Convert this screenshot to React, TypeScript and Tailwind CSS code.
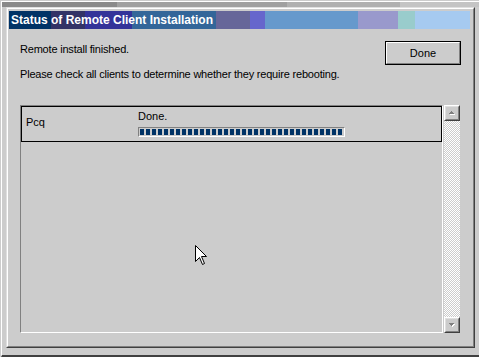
import React from "react";

function ScrollButton({ down }: { down?: boolean }) {
  return (
    <div className="h-[16px] w-[16px] shrink-0 border border-t-white border-l-white border-r-[#404040] border-b-[#404040] bg-[#cccccc]">
      <div className="flex h-full w-full items-center justify-center border border-t-[#dfdfdf] border-l-[#dfdfdf] border-r-[#808080] border-b-[#808080]">
        <svg width="7" height="5" viewBox="0 0 7 5">
          {down ? (
            <>
              <path d="M1 1h5v1H5v1H4v1H3V3H2V2H1z" fill="#ffffff" />
              <path d="M0 0h5v1H4v1H3v1H2V2H1V1H0z" fill="#808080" />
            </>
          ) : (
            <>
              <path d="M3 1h1v1h1v1h1v1H1V3h1V2h1z" fill="#ffffff" />
              <path d="M2 0h1v1h1v1h1v1H0V2h1V1h1z" fill="#808080" />
            </>
          )}
        </svg>
      </div>
    </div>
  );
}

function ProgressBar({ blocks }: { blocks: number }) {
  return (
    <div className="mt-[4px] flex h-[10px] w-[207px] gap-[2px] border border-t-[#808080] border-l-[#808080] border-r-white border-b-white p-px">
      {Array.from({ length: blocks }).map((_, i) => (
        <div key={i} className="h-[6px] w-[4px] bg-[#003366]" />
      ))}
    </div>
  );
}

function Cursor() {
  return (
    <svg
      className="absolute left-[195px] top-[245px]"
      width="13"
      height="21"
      viewBox="0 0 13 21"
    >
      <path
        d="M0.5 0.5V16.5L4.5 12.5L7.5 19.5L9.5 18.5L6.5 11.5H11.5Z"
        fill="#ffffff"
        stroke="#000000"
        strokeWidth="1"
        strokeLinejoin="miter"
      />
    </svg>
  );
}

export default function App() {
  return (
    <div className="relative h-[357px] w-[479px] overflow-hidden bg-[#cccccc] font-['Liberation_Sans',Arial,sans-serif] text-[11px] text-black">
      <div className="ml-px mt-px flex h-[356px] flex-col border-l border-t border-white border-b-2 border-b-[#404040]">
        <div className="h-[5px] shrink-0 bg-[linear-gradient(to_right,#8a8a8a_0_115px,#a0a0a0_115px_285px,#b0b0b0_285px_398px,#c4c4c4_398px)]" />
        <div className="ml-[4px] h-[341px] w-[469px] border border-t-[#dfdfdf] border-l-[#dfdfdf] border-r-[#404040] border-b-[#404040]">
          <div className="flex h-full flex-col border border-t-white border-l-white border-r-[#808080] border-b-[#808080]">
            <div className="ml-px mt-[2px] flex h-[18px] w-[461px] items-center bg-[linear-gradient(to_right,#003366_0_42px,#333366_42px_76px,#333399_76px_123px,#336699_123px_207px,#666699_207px_241px,#6666cc_241px_256px,#6699cc_256px_349px,#9999cc_349px_389px,#99cccc_389px_406px,#a6caf0_406px)] pl-[2px] text-[12px] font-bold leading-[18px] text-white">
              Status of Remote Client Installation
            </div>

            <div className="flex flex-col px-3 pt-3">
              <div className="flex items-start justify-between">
                <div className="mt-[2px] flex flex-col leading-[13px] tracking-[-0.2px]">
                  <p>Remote install finished.</p>
                  <p className="mt-3">
                    Please check all clients to determine whether they require
                    rebooting.
                  </p>
                </div>
                <button className="h-[24px] w-[76px] border border-black bg-[#cccccc]">
                  <div className="flex h-full w-full items-center justify-center border border-t-white border-l-white border-r-[#808080] border-b-[#808080] leading-[13px]">
                    Done
                  </div>
                </button>
              </div>

              <div className="mt-6 flex gap-px">
                <div className="h-[228px] w-[423px] border border-t-[#808080] border-l-[#808080] border-r-white border-b-white">
                  <div className="flex h-[36px] border border-black leading-[13px]">
                    <div className="w-[116px] pl-[4px] pt-[9px]">Pcq</div>
                    <div className="flex flex-col pt-[3px]">
                      <span>Done.</span>
                      <ProgressBar blocks={34} />
                    </div>
                  </div>
                </div>
                <div className="flex h-[228px] w-[16px] flex-col">
                  <ScrollButton />
                  <div className="flex-1 bg-[repeating-conic-gradient(#ffffff_0_25%,#cccccc_0_50%)] bg-[length:2px_2px]" />
                  <ScrollButton down />
                </div>
              </div>
            </div>
          </div>
        </div>
      </div>
      <Cursor />
    </div>
  );
}
